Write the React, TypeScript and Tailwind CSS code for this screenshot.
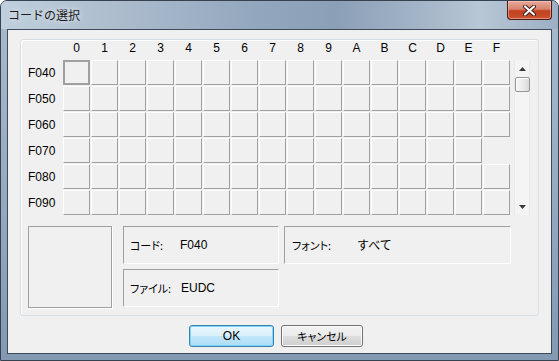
import React from "react";

const cols = ["0", "1", "2", "3", "4", "5", "6", "7", "8", "9", "A", "B", "C", "D", "E", "F"];
const rows = ["F040", "F050", "F060", "F070", "F080", "F090"];

const FONT = "[font-family:'Liberation_Sans','Noto_Sans_CJK_JP',sans-serif]";

function Cell({ selected, empty }: { selected?: boolean; empty?: boolean }) {
  if (empty) return <div className="w-[27px] h-[25px]" />;
  if (selected)
    return <div className="w-[27px] h-[25px] border-2 border-[#a0a0a0] bg-[#f0f0f0]" />;
  return (
    <div className="w-[27px] h-[25px] border-t border-l border-t-white border-l-white border-r border-b border-r-[#a0a0a0] border-b-[#a0a0a0] bg-[#f0f0f0]" />
  );
}

function Scrollbar() {
  return (
    <div className="ml-[4px] w-[16px] h-[155px] bg-[#f4f4f4] border-l border-r border-[#e9e9e9] flex flex-col items-center">
      <div className="h-[17px] w-full flex items-center justify-center">
        <svg width="7" height="4" viewBox="0 0 7 4">
          <path d="M3.5 0 L7 4 L0 4 Z" fill="#3a3a3a" />
        </svg>
      </div>
      <div className="w-[15px] h-[15px] rounded-[2px] border border-[#959595] bg-[linear-gradient(to_right,#f6f6f6_0%,#ececec_50%,#d9d9d9_100%)] shadow-[inset_1px_1px_0_#ffffff]" />
      <div className="flex-1" />
      <div className="h-[17px] w-full flex items-center justify-center">
        <svg width="7" height="4" viewBox="0 0 7 4">
          <path d="M0 0 L7 0 L3.5 4 Z" fill="#3a3a3a" />
        </svg>
      </div>
    </div>
  );
}

export default function App() {
  return (
    <div
      className={`w-[559px] h-[361px] rounded-t-[7px] border border-[#36424f] flex flex-col bg-[linear-gradient(to_bottom,#a9bacc_0%,#97abc1_50%,#8399b2_100%)] text-[12px] text-black ${FONT}`}
    >
      {/* Title bar */}
      <div className="h-[28px] flex items-start justify-between rounded-t-[6px] bg-[linear-gradient(to_right,#c0cfdd_0%,#adbdce_20%,#93a7be_45%,#8b9fb7_60%,#a3b4c7_75%,#b8c6d5_86%,#9cafc4_100%)]">
        <div className="pl-[7px] pt-[7px] leading-[14px] text-[12px] text-[#1a1a1a] [text-shadow:0_0_6px_rgba(255,255,255,0.9)] [font-family:'Noto_Sans_CJK_JP',sans-serif]">
          コードの選択
        </div>
        <div className="mr-[6px] w-[45px] h-[19px] rounded-b-[4px] border border-t-0 border-[#4b1b14] bg-[linear-gradient(to_bottom,#e9a99a_0%,#d8826d_45%,#c2401f_55%,#c8532f_100%)] shadow-[inset_0_0_0_1px_rgba(255,210,200,0.5)] flex items-center justify-center">
          <svg width="13" height="11" viewBox="0 0 13 11">
            <path d="M2 1.5 L11 9.5 M11 1.5 L2 9.5" stroke="#3d1a14" strokeWidth="4" strokeLinecap="round" />
            <path d="M2 1.5 L11 9.5 M11 1.5 L2 9.5" stroke="#ffffff" strokeWidth="2.2" strokeLinecap="round" />
          </svg>
        </div>
      </div>

      {/* Client area */}
      <div className="mx-[6px] h-[325px] border border-[#3d4b5b] bg-[#f0f0f0] flex flex-col">
        {/* Group */}
        <div className="ml-[12px] mt-[9px] w-[519px] h-[277px] rounded-[3px] border border-[#d5dfe5] shadow-[inset_1px_1px_0_#ffffff] flex flex-col">
          {/* Header */}
          <div className="h-[20px] flex pt-[1px]">
            <div className="w-[42px]" />
            <div className="flex gap-[1px]">
              {cols.map((c) => (
                <div key={c} className="w-[27px] text-center leading-[14px]">
                  {c}
                </div>
              ))}
            </div>
          </div>
          {/* Grid + scrollbar */}
          <div className="flex">
            <div className="flex flex-col gap-[1px]">
              {rows.map((r, ri) => (
                <div key={r} className="flex h-[25px]">
                  <div className="w-[42px] pl-[7px] flex items-center leading-[14px]">{r}</div>
                  <div className="flex gap-[1px]">
                    {cols.map((c, ci) => (
                      <Cell key={c} selected={ri === 0 && ci === 0} empty={ri === 3 && ci === 15} />
                    ))}
                  </div>
                </div>
              ))}
            </div>
            <Scrollbar />
          </div>
          {/* Bottom info */}
          <div className="mt-[11px] flex">
            <div className="ml-[7px] w-[84px] h-[82px] border border-[#a0a0a0] shadow-[1px_1px_0_#ffffff]" />
            <div className="ml-[11px] flex flex-col gap-[5px]">
              <div className="w-[156px] h-[38px] border border-t-[#a0a0a0] border-l-[#a0a0a0] border-r-white border-b-white flex items-center pl-[6px] leading-[14px]">
                <span className="w-[50px] [font-family:'Noto_Sans_CJK_JP',sans-serif] [font-feature-settings:'palt'] text-[11px]">コード:</span>
                <span>F040</span>
              </div>
              <div className="w-[156px] h-[38px] border border-t-[#a0a0a0] border-l-[#a0a0a0] border-r-white border-b-white flex items-center pl-[6px] leading-[14px]">
                <span className="w-[51px] [font-family:'Noto_Sans_CJK_JP',sans-serif] [font-feature-settings:'palt'] text-[11px]">ファイル:</span>
                <span>EUDC</span>
              </div>
            </div>
            <div className="ml-[5px] w-[227px] h-[38px] border border-t-[#a0a0a0] border-l-[#a0a0a0] border-r-white border-b-white flex items-center pl-[7px] leading-[14px]">
              <span className="w-[65px] [font-family:'Noto_Sans_CJK_JP',sans-serif] [font-feature-settings:'palt'] text-[11px]">フォント:</span>
              <span className="[font-family:'Noto_Sans_CJK_JP',sans-serif] text-[12px]">すべて</span>
            </div>
          </div>
        </div>

        {/* Buttons */}
        <div className="mt-[9px] ml-[181px] flex gap-[7px]">
          <div className="w-[85px] h-[22px] rounded-[3px] border border-[#3c7fb1] shadow-[inset_0_0_0_1px_#7fd6fb] bg-[linear-gradient(to_bottom,#eaf6fd_0%,#d9f0fc_50%,#c2e7fb_50%,#acdcf6_100%)] flex items-center justify-center leading-[14px]">
            OK
          </div>
          <div className="w-[82px] h-[22px] rounded-[3px] border border-[#707070] shadow-[inset_0_0_0_1px_#fcfcfc] bg-[linear-gradient(to_bottom,#f2f2f2_0%,#ebebeb_50%,#dddddd_50%,#cfcfcf_100%)] flex items-center justify-center leading-[14px] [font-family:'Noto_Sans_CJK_JP',sans-serif] [font-feature-settings:'palt'] text-[11px]">
            キャンセル
          </div>
        </div>
      </div>
    </div>
  );
}
